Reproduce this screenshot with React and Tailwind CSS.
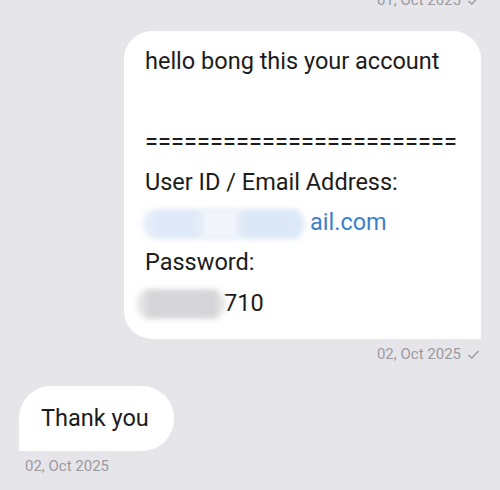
import React from "react";

function Check() {
  return (
    <svg width="13" height="11" viewBox="0 0 13 11" className="inline-block">
      <path d="M1.5 6 L4.8 9 L11.5 2" fill="none" stroke="#9b9aa0" strokeWidth="1.3" />
    </svg>
  );
}

export default function App() {
  return (
    <div
      className="w-[500px] h-[490px] overflow-hidden bg-[#e6e5ea] relative"
      style={{ fontFamily: "Roboto, 'Noto Sans', sans-serif" }}
    >
      <div className="flex flex-col">
        <div className="flex justify-end items-center gap-[6px] pr-[20px] h-[16px] -mt-[8px] text-[15px] text-[#9b9aa0] leading-none">
          <span>01, Oct 2025</span>
          <Check />
        </div>
        <div className="flex justify-end pr-[19px] mt-[23px]">
          <div className="w-[357px] bg-white rounded-[28px] rounded-br-none pl-[21px] pr-3 pt-[10px] pb-[16px] text-[23.5px] leading-[40.3px] text-[#1c1c1c]">
            <div>hello bong this your account</div>
            <div>&nbsp;</div>
            <div className="tracking-[0.1px]">========================</div>
            <div>User ID / Email Address:</div>
            <div className="flex items-center">
              <div className="relative w-[167px] h-[34px] -ml-[2px]">
                <div className="absolute left-[0px] top-[4px] w-[162px] h-[30px] rounded-[14px] bg-[#e4ecf8] blur-[3px]" />
                <div className="absolute left-[12px] top-[6px] w-[40px] h-[26px] bg-[#dfe9f8] blur-[2px]" />
                <div className="absolute left-[60px] top-[6px] w-[34px] h-[26px] bg-[#f2f5fb] blur-[2px]" />
                <div className="absolute left-[100px] top-[6px] w-[56px] h-[26px] bg-[#dce8f7] blur-[2px]" />
              </div>
              <span className="text-[#3d7fc8]">ail.com</span>
            </div>
            <div>Password:</div>
            <div className="flex items-center">
              <div className="relative w-[87px] h-[36px] -ml-[8px]">
                <div className="absolute left-[0px] top-[4px] w-[88px] h-[30px] rounded-[14px] bg-[#e2e2e4] blur-[3px]" />
                <div className="absolute left-[10px] top-[6px] w-[70px] h-[26px] bg-[#d6d6d8] blur-[2px]" />
              </div>
              <span>710</span>
            </div>
          </div>
        </div>
        <div className="flex justify-end items-center gap-[6px] pr-[20px] mt-[8px] text-[15px] text-[#9b9aa0] leading-none">
          <span>02, Oct 2025</span>
          <Check />
        </div>
        <div className="flex mt-[24px] pl-[19px]">
          <div className="bg-white rounded-[32px] rounded-bl-none pl-[22px] pr-[25px] h-[65px] flex items-center text-[23.5px] text-[#1c1c1c]">
            Thank you
          </div>
        </div>
        <div className="pl-[25px] mt-[8px] text-[15px] text-[#9b9aa0] leading-none">02, Oct 2025</div>
      </div>
    </div>
  );
}
